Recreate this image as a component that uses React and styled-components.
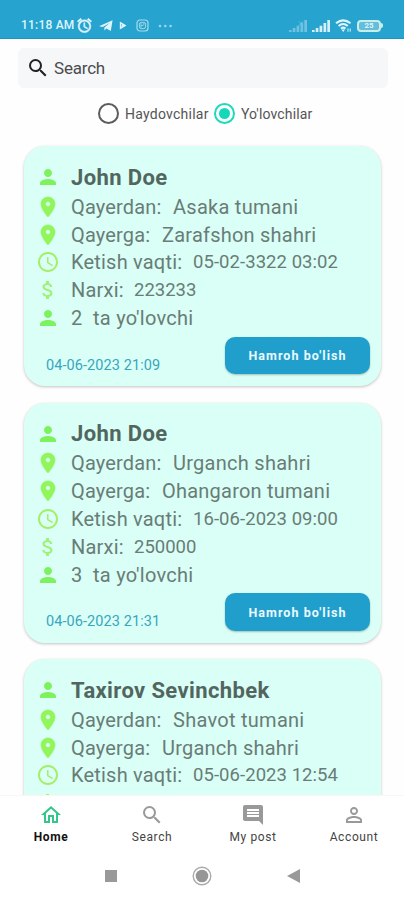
import React from "react";
import styled, { createGlobalStyle } from "styled-components";
import {
  MdPerson, MdLocationOn, MdAccessTime, MdAttachMoney, MdSearch,
  MdOutlineHome, MdComment, MdPersonOutline, MdAlarm,
} from "react-icons/md";

const GlobalStyle = createGlobalStyle`
  * { box-sizing: border-box; }
  body { margin: 0; background: #fff; font-family: Roboto, "Liberation Sans", sans-serif; }
`;

const Screen = styled.div`
  width: 404px;
  height: 900px;
  display: flex;
  flex-direction: column;
  background: #fefefe;
  overflow: hidden;
`;

const StatusBar = styled.header`
  height: 39px;
  flex: none;
  display: flex;
  justify-content: space-between;
  padding: 12px 21px 0;
  background: #26a3cf;
  border-bottom: 1px solid #1d94bf;
  color: #dff5fb;
`;

const StatusGroup = styled.div`
  height: 27px;
  display: flex;
  align-items: center;
  gap: ${(p) => p.$gap || 0}px;
  svg { display: block; flex: none; }
`;

const Clock = styled.span`
  font-size: 12px;
  font-weight: 500;
  line-height: 27px;
  letter-spacing: 0.2px;
  white-space: nowrap;
  width: 55px;
`;

const AlarmIcon = styled(MdAlarm)`
  stroke: currentColor;
  stroke-width: 0.8px;
  path[fill="none"] { stroke: none; }
`;

const SearchField = styled.div`
  flex: none;
  height: 40px;
  margin: 9px 16px 0 18px;
  padding-left: 8px;
  display: flex;
  align-items: center;
  gap: 4px;
  border-radius: 6px;
  background: #f5f7f9;
  color: #4a4c4e;
  font-size: 17px;
  letter-spacing: -0.2px;
  svg { color: #222; }
`;

const Filters = styled.div`
  flex: none;
  height: 51px;
  display: flex;
  align-items: center;
  padding-left: 98px;
`;

const Option = styled.label`
  display: flex;
  align-items: center;
  width: ${(p) => p.$width}px;
  gap: 6px;
  color: #555;
  font-size: 14px;
  letter-spacing: ${(p) => p.$spacing}px;
  white-space: nowrap;
`;

const Radio = styled.span`
  flex: none;
  width: 21px;
  height: 21px;
  display: grid;
  place-items: center;
  border-radius: 50%;
  border: 2px solid ${(p) => (p.$on ? "#1fd8c0" : "#5c5c5c")};
  &::after {
    content: "";
    width: 11px;
    height: 11px;
    border-radius: 50%;
    background: ${(p) => (p.$on ? "#14d8bb" : "transparent")};
  }
`;

const List = styled.main`
  flex: 1;
  min-height: 0;
  overflow: hidden;
  padding: 7px 23px 0 24px;
  display: flex;
  flex-direction: column;
  gap: 16.5px;
`;

const Card = styled.article`
  flex: none;
  height: 240px;
  border-radius: 21px;
  background: #d9fff6;
  box-shadow: 0 1px 3px rgba(0, 0, 0, 0.24);
  padding: 16px 11px 0 12px;
  display: flex;
  flex-direction: column;
`;

const Row = styled.div`
  flex: none;
  height: ${(p) => (p.$title ? 31 : 27.8)}px;
  padding-bottom: ${(p) => (p.$title ? 0.5 : 0)}px;
  display: flex;
  align-items: center;
  color: #6a7c77;
  white-space: nowrap;
  svg { flex: none; width: 24px; height: 24px; margin-right: 11px; color: ${(p) => p.$icon}; }
`;

const PinIcon = styled(MdLocationOn)`
  stroke: currentColor;
  stroke-width: 0.7px;
  path[fill="none"] { stroke: none; }
`;

const Name = styled.h2`
  margin: 0;
  font-size: 22px;
  font-weight: 700;
  color: #52665f;
  letter-spacing: 0.38px;
`;

const Label = styled.span`
  width: ${(p) => p.$width}px;
  font-size: 20px;
  letter-spacing: ${(p) => p.$spacing || 0}px;
`;

const Value = styled.span`
  font-size: ${(p) => (p.$numeric ? 18.5 : 20)}px;
  letter-spacing: ${(p) => p.$spacing || 0}px;
`;

const Footer = styled.footer`
  display: flex;
  justify-content: space-between;
  align-items: flex-start;
  padding: 5px 0 0 10px;
`;

const Posted = styled.time`
  padding-top: 20px;
  font-size: 14.5px;
  line-height: 18px;
  letter-spacing: 0.08px;
  color: #38a5bf;
`;

const JoinButton = styled.button`
  width: 145px;
  height: 37.5px;
  border: 0;
  padding: 0;
  border-radius: 10px;
  background: #209fcd;
  color: #eafaff;
  box-shadow: 0 1px 2px rgba(0, 0, 0, 0.25);
  font: 700 12.5px Roboto, sans-serif;
  letter-spacing: 1.05px;
`;

const TabBar = styled.nav`
  flex: none;
  height: 60px;
  display: grid;
  grid-template-columns: repeat(4, 101px);
  background: #fff;
  border-top: 1px solid #f7f7f7;
`;

const Tab = styled.div`
  display: flex;
  flex-direction: column;
  align-items: center;
  padding: 7px 0 0 1px;
  color: ${(p) => (p.$active ? "#111" : "#444")};
  font-size: 12px;
  font-weight: ${(p) => (p.$active ? 700 : 400)};
  line-height: 16px;
  letter-spacing: 0.6px;
  svg { width: 24px; height: 24px; margin-bottom: 2px; color: ${(p) => (p.$active ? "#35c68d" : "#999")}; }
`;

const SystemBar = styled.div`
  flex: none;
  height: 45px;
  display: flex;
  align-items: center;
  justify-content: space-between;
  padding: 0 104px 4px 105px;
  background: #fff;
  svg { display: block; }
`;

const TelegramIcon = () => (
  <svg width="14" height="12" viewBox="0 0 14 12">
    <path d="M0 6.2 13.6.3 11.8 11 7.4 8.5 5.4 10.6V7.5L10.6 3 3.8 7.1Z" fill="currentColor" />
  </svg>
);
const PlayIcon = () => (
  <svg width="8" height="9" viewBox="0 0 8 9">
    <path d="M.8.5 7.5 4.5.8 8.4Z" fill="currentColor" />
    <path d="M2.6 3v2.6" stroke="#65bddd" strokeWidth=".8" />
  </svg>
);
const CameraIcon = () => (
  <svg width="13" height="13" viewBox="0 0 13 13" fill="none" stroke="#a8dcec">
    <rect x="1" y="1" width="11" height="11" rx="3" strokeWidth="1.2" />
    <rect x="3.4" y="3.4" width="6.2" height="6.2" rx="2" />
    <path d="M5 4.2v4.5M7.8 4v2.3M5 6.5h2.3" strokeWidth=".8" />
  </svg>
);
const DotsIcon = () => (
  <svg width="15" height="4" viewBox="0 0 15 4" fill="#9ed6e9">
    <circle cx="2" cy="2" r="1.3" /><circle cx="7.3" cy="2" r="1.3" /><circle cx="12.6" cy="2" r="1.3" />
  </svg>
);
const SignalIcon = ({ faint }) => (
  <svg width="18" height="12" viewBox="0 0 18 12" opacity={faint ? 0.4 : 0.95}>
    <path d="M0 12V10H2.6V12ZM3.7 12V8H6.4V12ZM7.6 12V5.7H10.3V12ZM11.5 12V3H14.2V12ZM15.3 12V0H18V12Z" fill="currentColor" />
    {faint && <path d="M10 1.5l4 4m0-4l-4 4" stroke="currentColor" />}
  </svg>
);
const WifiIcon = () => (
  <svg width="17" height="14" viewBox="0 0 17 14" fill="none" stroke="currentColor" strokeWidth="2.1">
    <path d="M1 4.3Q8.2-1.7 15.5 4.3M3.6 7Q8.2 3 12.8 7M6 9.6Q8.2 7.8 10.5 9.6" />
    <path d="M6.5 10.6h3.5L8.2 13Z" fill="currentColor" stroke="none" />
    <path d="M13 9.5v3.2m2.2-3.2v3.2" strokeWidth="1" />
  </svg>
);
const Battery = styled.span`
  display: flex;
  align-items: center;
`;
const BatteryBox = styled.span`
  width: 24px;
  height: 12px;
  border: 2px solid #c8eee6;
  border-radius: 4px;
  background: #65bddd;
  font-size: 8px;
  line-height: 8px;
  font-weight: 700;
  text-align: center;
`;
const BatteryTip = styled.span`
  width: 2px;
  height: 5px;
  border-radius: 0 2px 2px 0;
  background: #c8eee6;
`;

const rides = [
  { name: "John Doe", from: "Asaka tumani", to: "Zarafshon shahri", leave: "05-02-3322 03:02", price: "223233", seats: "2", posted: "04-06-2023 21:09" },
  { name: "John Doe", from: "Urganch shahri", to: "Ohangaron tumani", leave: "16-06-2023 09:00", price: "250000", seats: "3", posted: "04-06-2023 21:31" },
  { name: "Taxirov Sevinchbek", from: "Shavot tumani", to: "Urganch shahri", leave: "05-06-2023 12:54", preview: true },
];

const DollarHint = () => <Row $icon="#9df277"><MdAttachMoney /></Row>;

function RideCard({ ride }) {
  return (
    <Card>
      <Row $title $icon="#7df25e"><MdPerson /><Name>{ride.name}</Name></Row>
      <Row $icon="#91f55b"><PinIcon /><Label $width={102} $spacing={0.15}>Qayerdan:</Label><Value $spacing={0.27}>{ride.from}</Value></Row>
      <Row $icon="#91f55b"><PinIcon /><Label $width={91} $spacing={0.15}>Qayerga:</Label><Value $spacing={0.22}>{ride.to}</Value></Row>
      <Row $icon="#a5ee68"><MdAccessTime /><Label $width={122} $spacing={0.2}>Ketish vaqti:</Label><Value $numeric $spacing={0.06}>{ride.leave}</Value></Row>
      {ride.preview ? <DollarHint /> : (
        <>
          <Row $icon="#9df277"><MdAttachMoney /><Label $width={63} $spacing={0.2}>Narxi:</Label><Value $numeric>{ride.price}</Value></Row>
          <Row $icon="#7df25e"><MdPerson /><Label $width={22}>{ride.seats}</Label><Value $spacing={0.25}>ta yo'lovchi</Value></Row>
          <Footer><Posted>{ride.posted}</Posted><JoinButton>Hamroh bo'lish</JoinButton></Footer>
        </>
      )}
    </Card>
  );
}

export default function App() {
  return (
    <Screen>
      <GlobalStyle />
      <StatusBar>
        <StatusGroup $gap={6}>
          <StatusGroup><Clock>11:18 AM</Clock><AlarmIcon size={17} /></StatusGroup>
          <TelegramIcon />
          <StatusGroup $gap={9}><PlayIcon /><CameraIcon /><DotsIcon /></StatusGroup>
        </StatusGroup>
        <StatusGroup $gap={5}>
          <SignalIcon faint /><SignalIcon /><WifiIcon /><Battery><BatteryBox>25</BatteryBox><BatteryTip /></Battery>
        </StatusGroup>
      </StatusBar>
      <SearchField><MdSearch size={24} /><span>Search</span></SearchField>
      <Filters>
        <Option $width={116} $spacing={0.25}><Radio /><span>Haydovchilar</span></Option>
        <Option $width={110} $spacing={0.15}><Radio $on /><span>Yo'lovchilar</span></Option>
      </Filters>
      <List>{rides.map((ride, i) => <RideCard key={i} ride={ride} />)}</List>
      <TabBar>
        <Tab $active><MdOutlineHome /><span>Home</span></Tab>
        <Tab><MdSearch /><span>Search</span></Tab>
        <Tab><MdComment /><span>My post</span></Tab>
        <Tab><MdPersonOutline /><span>Account</span></Tab>
      </TabBar>
      <SystemBar>
        <svg width="12" height="12" viewBox="0 0 12 12"><path d="M0 0h12v12H0z" fill="#999" /></svg>
        <svg width="20" height="20" viewBox="0 0 20 20"><circle cx="10" cy="10" r="8.8" fill="none" stroke="#aaa" strokeWidth="1.4" /><circle cx="10" cy="10" r="6.3" fill="#969696" /></svg>
        <svg width="13" height="14" viewBox="0 0 13 14"><path d="M13 0v14L0 7Z" fill="#999" /></svg>
      </SystemBar>
    </Screen>
  );
}
